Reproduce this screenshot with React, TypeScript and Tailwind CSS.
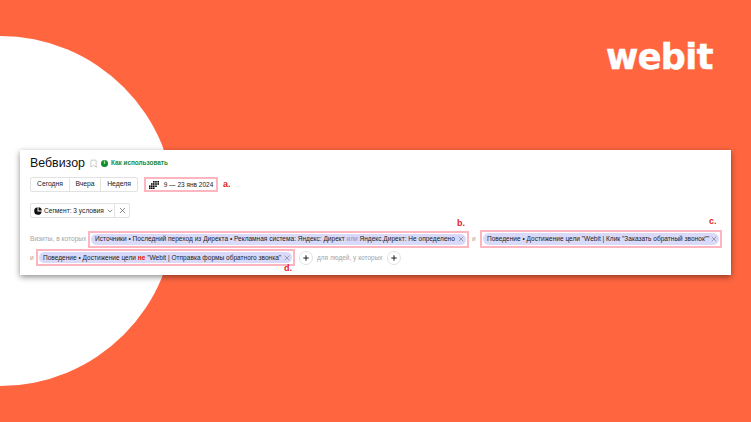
import { X, Plus, ChevronDown, Bookmark } from "lucide-react";

const font = { fontFamily: '"Liberation Sans", Arial, sans-serif' };

function CalendarDots() {
  return (
    <svg width="10" height="8" viewBox="0 0 10 8" className="shrink-0 text-black">
      <g fill="currentColor">
        <rect x="4" y="0" width="1.6" height="1.6" />
        <rect x="6.2" y="0" width="1.6" height="1.6" />
        <rect x="8.4" y="0" width="1.6" height="1.6" />
        <rect x="2" y="2.2" width="1.6" height="1.6" />
        <rect x="4" y="2.2" width="1.6" height="1.6" />
        <rect x="6.2" y="2.2" width="1.6" height="1.6" />
        <rect x="8.4" y="2.2" width="1.6" height="1.6" />
        <rect x="0" y="4.4" width="1.6" height="1.6" />
        <rect x="2" y="4.4" width="1.6" height="1.6" />
        <rect x="4" y="4.4" width="1.6" height="1.6" />
        <rect x="6.2" y="4.4" width="1.6" height="1.6" />
        <rect x="0" y="6.4" width="1.6" height="1.6" />
        <rect x="2" y="6.4" width="1.6" height="1.6" />
        <rect x="4" y="6.4" width="1.6" height="1.6" />
      </g>
    </svg>
  );
}

function SegmentIcon() {
  return (
    <svg width="8" height="8" viewBox="0 0 10 10" className="shrink-0">
      <path d="M4.4 0.4v5.2h5.2A4.7 4.7 0 1 1 4.4.4z" fill="#111" />
      <path d="M5.6 0.2A4.4 4.4 0 0 1 9.8 4.4H5.6z" fill="#111" />
    </svg>
  );
}

function Pill({ children, className }: { children: React.ReactNode; className: string }) {
  return (
    <div className={`shrink-0 border-2 border-[#fdb6bf] p-px ${className}`}>
      <div className="flex h-full items-center justify-between rounded-full bg-[#d9daf9] pl-[4px] pr-[1px] text-[6.55px] text-[#222] whitespace-nowrap">
        <span>{children}</span>
        <X className="h-[8px] w-[8px] shrink-0 text-[#8a8a98]" strokeWidth={2.4} />
      </div>
    </div>
  );
}

function RoundPlus() {
  return (
    <div className="flex h-[14px] w-[14px] items-center justify-center rounded-full border border-[#e3e3e3] bg-white">
      <Plus className="h-[8px] w-[8px] text-black" strokeWidth={2.6} />
    </div>
  );
}

export default function App() {
  return (
    <div className="relative h-[422px] w-[751px] overflow-hidden bg-[#ff6640]" style={font}>
      <div className="absolute left-[-175px] top-[36px] h-[350px] w-[350px] rounded-full bg-white" />

      <div
        className="absolute left-[606px] top-[33px] text-[35px] font-black leading-[48px] tracking-[-0.6px] text-white [-webkit-text-stroke:0.5px_white]"
        style={{ fontFamily: '"DejaVu Sans", sans-serif' }}
      >
        webit
      </div>

      <div className="absolute left-[20px] top-[150px] h-[125px] w-[711px] bg-white pl-[10px] pt-[3px] shadow-[0_2px_6px_rgba(0,0,0,0.45)]">
        <div className="flex h-[20px] items-center">
          <h1 className="text-[12.4px] leading-none text-[#111]">Вебвизор</h1>
          <Bookmark className="ml-[4px] h-[9px] w-[9px] text-[#a8a8a8]" strokeWidth={1.6} />
          <span className="ml-[3px] flex h-[7px] w-[7px] items-center justify-center rounded-full bg-[#0f8a2c] text-[5px] font-bold text-white">i</span>
          <span className="ml-[3px] text-[6.4px] font-bold text-[#1a8a3a]">Как использовать</span>
        </div>

        <div className="mt-[4px] flex h-[15px] items-center">
          <div className="flex h-full items-center rounded-[2px] border border-[#e2e2e2] text-[6.8px] text-[#222]">
            <span className="flex h-full w-[39px] items-center justify-center border-r border-[#e2e2e2]">Сегодня</span>
            <span className="flex h-full w-[31px] items-center justify-center border-r border-[#e2e2e2]">Вчера</span>
            <span className="flex h-full w-[36px] items-center justify-center">Неделя</span>
          </div>
          <div className="ml-[6px] flex h-[15px] w-[74px] items-center justify-center gap-[5px] border-2 border-[#fdb6bf] text-[6.5px] text-[#222]">
            <CalendarDots />
            <span className="whitespace-nowrap">9 — 23 янв 2024</span>
          </div>
          <span className="ml-[5px] text-[9px] font-bold text-[#e0231f]">a.</span>
        </div>

        <div className="mt-[11px] flex h-[15px] w-[100px] items-center rounded-[2px] border border-[#e2e2e2] text-[6.6px] text-[#222]">
          <div className="flex h-full flex-1 items-center gap-[2px] border-r border-[#e2e2e2] pl-[3px]">
            <SegmentIcon />
            <span className="whitespace-nowrap">Сегмент: 3 условия</span>
            <ChevronDown className="h-[8px] w-[8px] shrink-0" strokeWidth={1.5} />
          </div>
          <div className="flex h-full w-[14px] items-center justify-center">
            <X className="h-[9px] w-[9px] text-[#555]" strokeWidth={1.8} />
          </div>
        </div>

        <div className="mt-[12px] flex h-[18px] items-center">
          <span className="w-[58px] shrink-0 whitespace-nowrap text-[6.6px] text-[#a5a5a5]">Визиты, в которых</span>
          <Pill className="h-[17px] w-[381px]">
            Источники • Последний переход из Директа • Рекламная система: Яндекс: Директ <span className="text-[#8b8bc9]">или</span> Яндекс.Директ: Не определено
          </Pill>
          <span className="ml-[3px] w-[8px] shrink-0 text-[6.6px] text-[#a5a5a5]">и</span>
          <Pill className="h-[18px] w-[242px]">
            Поведение • Достижение цели "Webit | Клик "Заказать обратный звонок""
          </Pill>
        </div>

        <div className="mt-px flex h-[17px] items-center">
          <span className="w-[6px] shrink-0 text-[6.6px] text-[#a5a5a5]">и</span>
          <Pill className="h-[17px] w-[259px]">
            Поведение • Достижение цели <span className="font-bold text-[#e8101a]">не</span> "Webit | Отправка формы обратного звонка"
          </Pill>
          <div className="ml-[4px]">
            <RoundPlus />
          </div>
          <span className="ml-[4px] whitespace-nowrap text-[6.5px] text-[#a5a5a5]">для людей, у которых</span>
          <div className="ml-[4px]">
            <RoundPlus />
          </div>
        </div>

        <span className="absolute left-[437px] top-[67px] text-[9px] font-bold text-[#e0231f]">b.</span>
        <span className="absolute left-[689px] top-[65px] text-[9px] font-bold text-[#e0231f]">c.</span>
        <span className="absolute left-[264px] top-[114px] text-[9px] leading-none font-bold text-[#e0231f]">d.</span>
      </div>
    </div>
  );
}
